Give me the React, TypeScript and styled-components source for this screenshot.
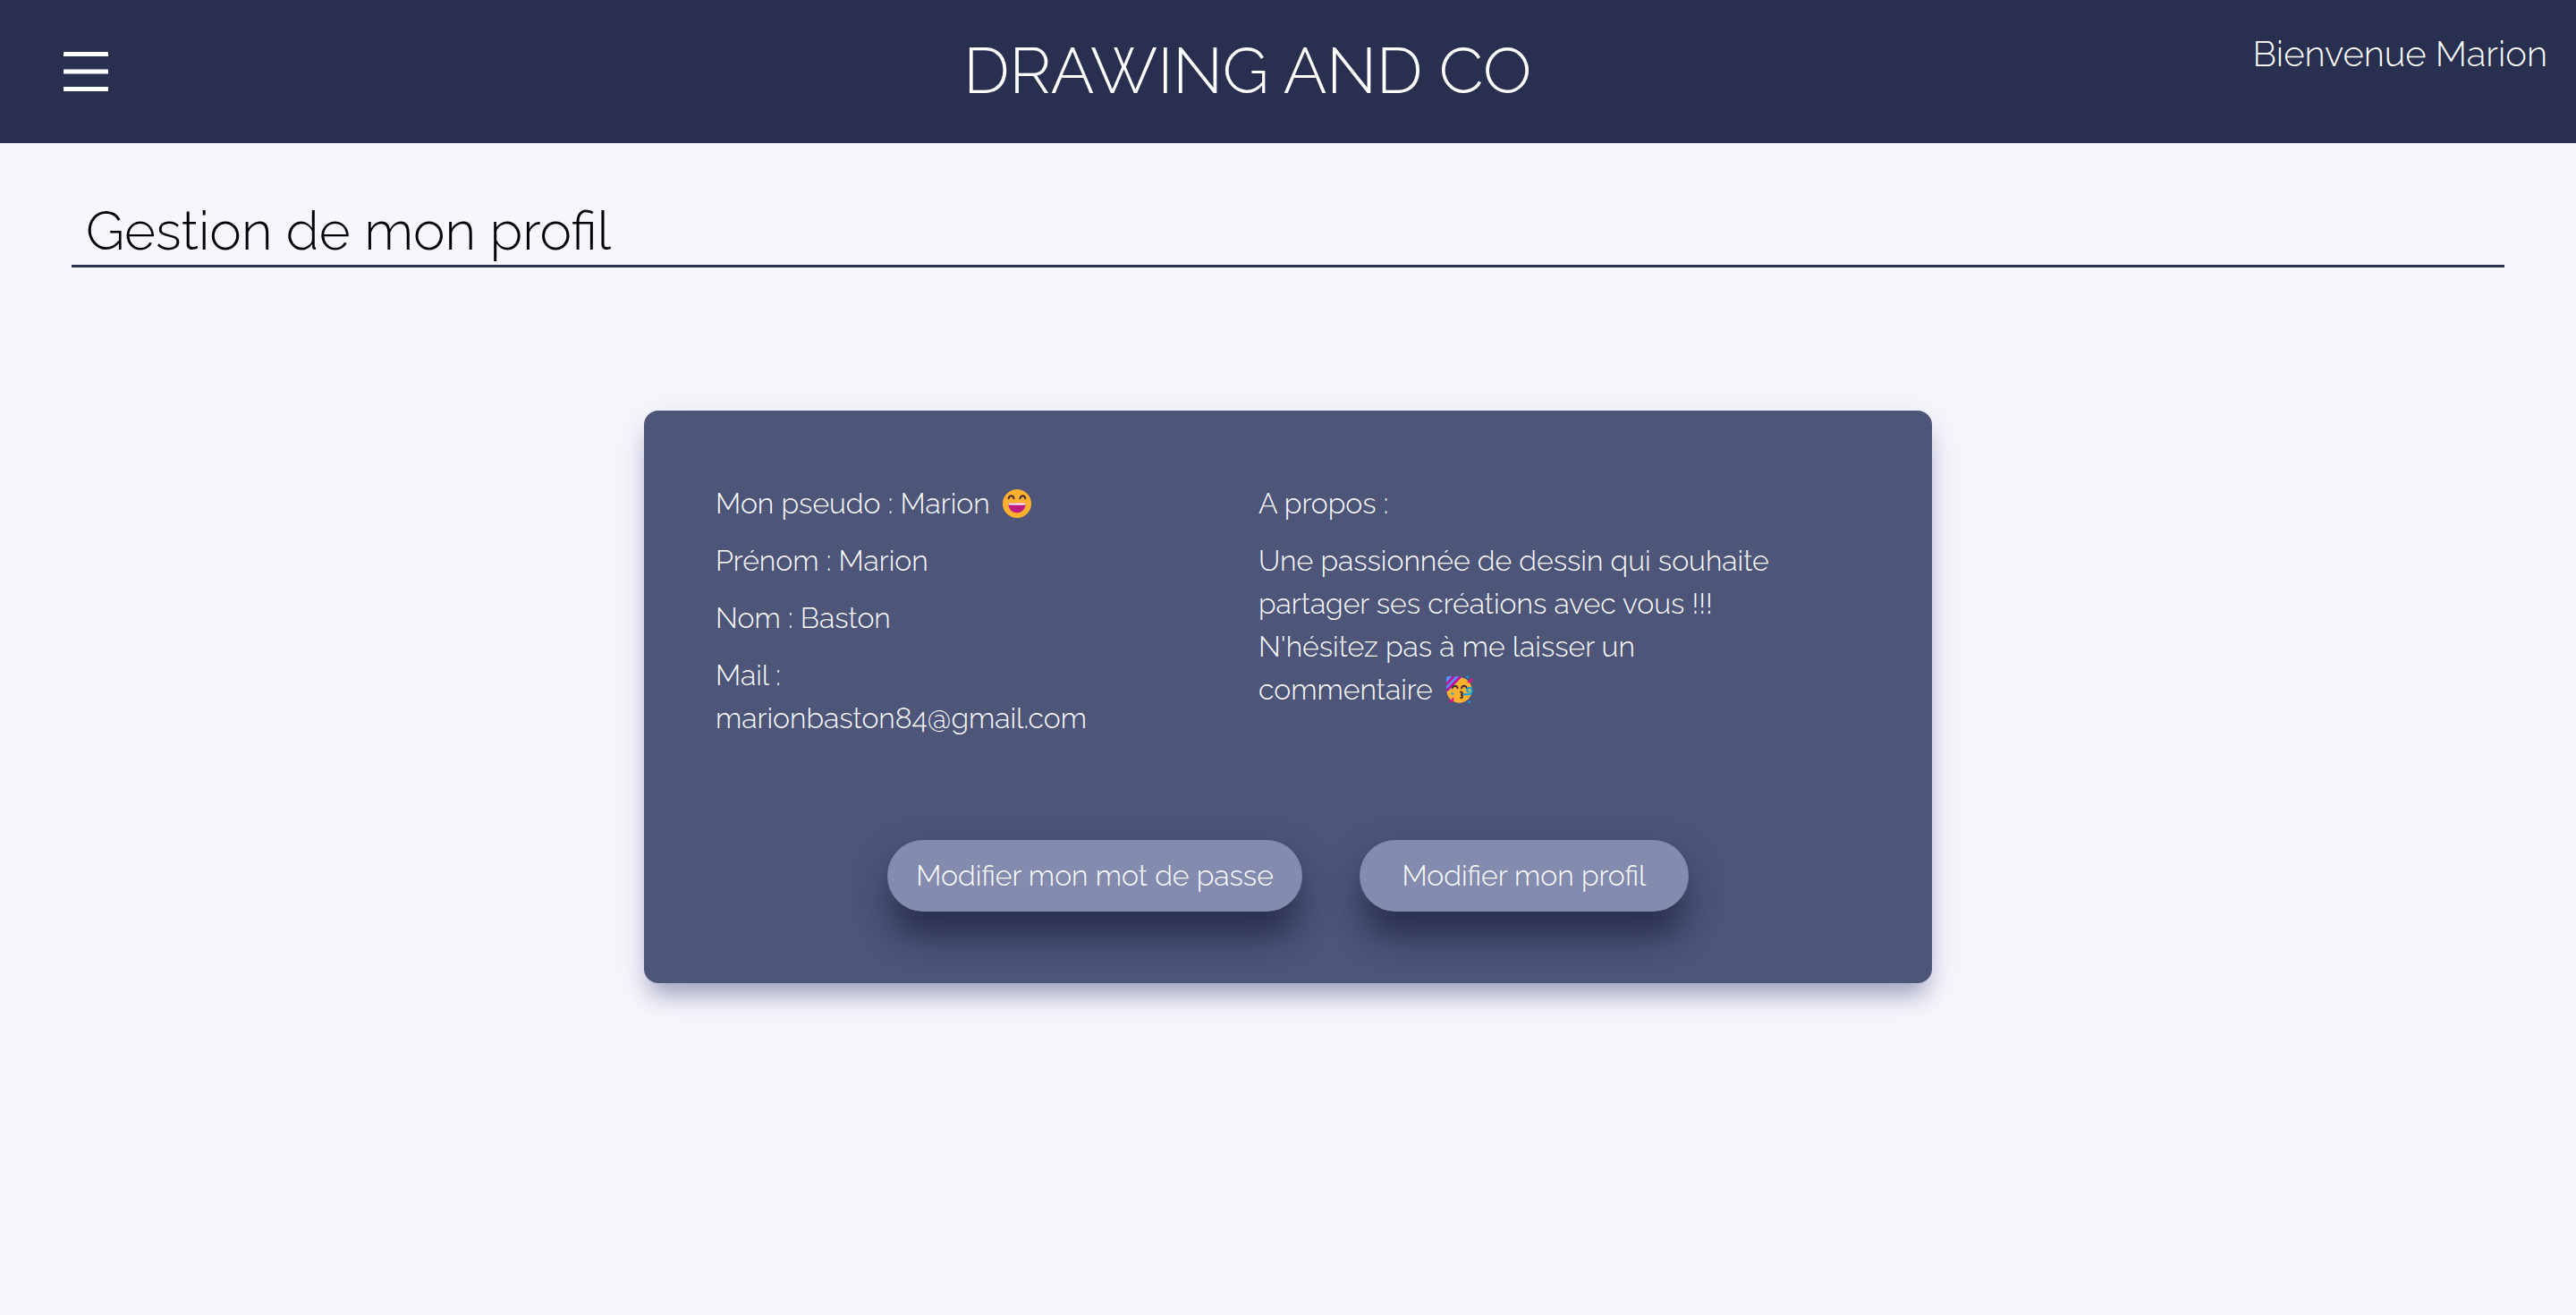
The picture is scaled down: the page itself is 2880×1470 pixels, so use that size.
import React from 'react';
import styled, { createGlobalStyle } from 'styled-components';

const colors = {
  night: '#292f4f',
  slate: '#4d5579',
  lavender: '#838bae',
  page: '#f6f6fc',
  white: '#ffffff',
};

const GlobalStyle = createGlobalStyle`
  *, *::before, *::after {
    box-sizing: border-box;
  }

  body {
    margin: 0;
    background: ${colors.page};
    color: #000000;
    font-family: Raleway, Lato, sans-serif;
    font-size: 32px;
    font-weight: 300;
    line-height: 48px;
  }
`;

const Header = styled.header`
  display: flex;
  align-items: center;
  justify-content: space-between;
  height: 160px;
  padding: 0 32px 0 63px;
  background: ${colors.night};
  color: ${colors.white};
`;

const MenuSlot = styled.nav`
  display: flex;
  flex: 0 0 208px;
`;

const MenuButton = styled.button`
  display: flex;
  padding: 8px;
  border: 0;
  background: none;
  color: inherit;
  cursor: pointer;
`;

const Brand = styled.h1`
  margin: 0;
  padding-bottom: 2px;
  font-size: 72px;
  font-weight: 300;
  line-height: 84px;
`;

const Welcome = styled.p`
  align-self: flex-start;
  margin: 0;
  padding-top: 36px;
  font-size: 40px;
`;

const Main = styled.main`
  padding: 64px 80px;
`;

const PageTitle = styled.h2`
  margin: 0 0 160px;
  padding: 0 16px 4px;
  border-bottom: 3px solid ${colors.night};
  font-size: 60px;
  font-weight: 300;
  line-height: 68px;
`;

const Card = styled.section`
  display: flex;
  flex-direction: column;
  gap: 112px;
  width: 100%;
  max-width: 1440px;
  margin: 0 auto;
  padding: 80px;
  border-radius: 16px;
  background: ${colors.slate};
  color: ${colors.white};
  box-shadow:
    0 20px 24px -8px rgba(41, 47, 95, 0.33),
    0 12px 36px rgba(60, 66, 140, 0.16);
`;

const Details = styled.div`
  display: grid;
  grid-template-columns: 448px 592px;
  column-gap: 159px;
`;

const Column = styled.div`
  display: flex;
  flex-direction: column;
  gap: 16px;
`;

const Line = styled.p`
  margin: 0;
`;

const Emoji = styled.svg`
  display: inline-block;
  width: 36px;
  height: 36px;
  margin-left: 4px;
  vertical-align: -7px;
`;

const Actions = styled.div`
  display: flex;
  justify-content: center;
  gap: 64px;
`;

const ActionButton = styled.button`
  min-width: 368px;
  height: 80px;
  padding: 0 32px;
  border: 0;
  border-radius: 40px;
  background: ${colors.lavender};
  color: ${colors.white};
  font: inherit;
  box-shadow:
    0 34px 36px -8px rgba(41, 47, 79, 0.95),
    0 16px 40px rgba(41, 47, 79, 0.45);
  cursor: pointer;
`;

function MenuIcon() {
  return (
    <svg width="50" height="44" viewBox="0 0 50 44" fill="currentColor" aria-hidden="true">
      <rect width="50" height="5" rx="0.5" />
      <rect y="19.5" width="50" height="5" rx="0.5" />
      <rect y="39" width="50" height="5" rx="0.5" />
    </svg>
  );
}

function LaughingFace() {
  return (
    <Emoji viewBox="0 0 36 36" role="img" aria-label="😄">
      <circle cx="18" cy="18" r="16" fill="#ffb02e" />
      <path
        d="M8.6 12.200c.8-4 5.200-4 6 0M21.400 12.200c.8-4 5.200-4 6 0"
        fill="none"
        stroke="#402a32"
        strokeWidth="2"
        strokeLinecap="round"
      />
      <path d="M8.400 17.500h19.200c0 6.800-4 10.700-9.600 10.700S8.400 24.300 8.400 17.500z" fill="#bb1d80" />
      <path d="M8.400 17.500h19.200c0 1.200-.6 2-1.600 2H10c-1 0-1.600-.8-1.600-2z" fill="#ffffff" />
    </Emoji>
  );
}

function PartyingFace() {
  return (
    <Emoji viewBox="0 0 36 36" role="img" aria-label="🥳">
      <circle cx="17.500" cy="18.500" r="14.200" fill="#ffb02e" />
      <path d="M3 4.500C3 3.500 3.800 3 4.700 3H18c1.500 0 2 1.200 1.200 2.200L5.500 19.500C4.500 20.500 3 20 3 18.500z" fill="#5092ff" />
      <path d="M3.200 10L9.500 3h3.600L3.200 14zM4 20L19.600 4.500c.3-.9-.2-1.500-1.600-1.500h-.9L3 17.500v1c0 .8.400 1.400 1 1.500z" fill="#ca0b8e" />
      <path
        d="M9.800 16.400c.7-3.600 5-3.600 5.800 0M20 16.400c.7-3.600 5-3.600 5.800 0M19 20.500c2.600-.2 2.600 3.200 0 3.200 2.600 0 2.600 3.400 0 3.400"
        fill="none"
        stroke="#402a32"
        strokeWidth="1.900"
        strokeLinecap="round"
      />
      <path
        d="M22.500 23.300h4.800c4.600 0 6.200-6.300 1.800-7.200-3.300-.5-4.300 4.300-1 4.300"
        fill="none"
        stroke="#00a6ed"
        strokeWidth="2"
        strokeLinecap="round"
      />
      <path
        d="M31 6.200c0 1.900-1.200 3-3.200 3M10.500 28c-.2 1.900-1.300 2.900-3.200 3"
        fill="none"
        stroke="#f70a8d"
        strokeWidth="2.200"
        strokeLinecap="round"
      />
      <circle cx="26.800" cy="3.600" r="1.400" fill="#00a6ed" />
      <circle cx="10" cy="22.500" r="1.300" fill="#00a6ed" />
      <circle cx="28.500" cy="31.500" r="1.300" fill="#00a6ed" />
    </Emoji>
  );
}

export default function App() {
  return (
    <>
      <GlobalStyle />
      <Header>
        <MenuSlot>
          <MenuButton type="button" aria-label="Menu">
            <MenuIcon />
          </MenuButton>
        </MenuSlot>
        <Brand>DRAWING AND CO</Brand>
        <Welcome>Bienvenue Marion</Welcome>
      </Header>
      <Main>
        <PageTitle>Gestion de mon profil</PageTitle>
        <Card>
          <Details>
            <Column>
              <Line>
                Mon pseudo : Marion <LaughingFace />
              </Line>
              <Line>Prénom : Marion</Line>
              <Line>Nom : Baston</Line>
              <Line>Mail : marionbaston84@gmail.com</Line>
            </Column>
            <Column>
              <Line>A propos :</Line>
              <Line>
                Une passionnée de dessin qui souhaite partager ses créations avec vous !!!
                <br />
                N'hésitez pas à me laisser un commentaire <PartyingFace />
              </Line>
            </Column>
          </Details>
          <Actions>
            <ActionButton type="button">Modifier mon mot de passe</ActionButton>
            <ActionButton type="button">Modifier mon profil</ActionButton>
          </Actions>
        </Card>
      </Main>
    </>
  );
}
